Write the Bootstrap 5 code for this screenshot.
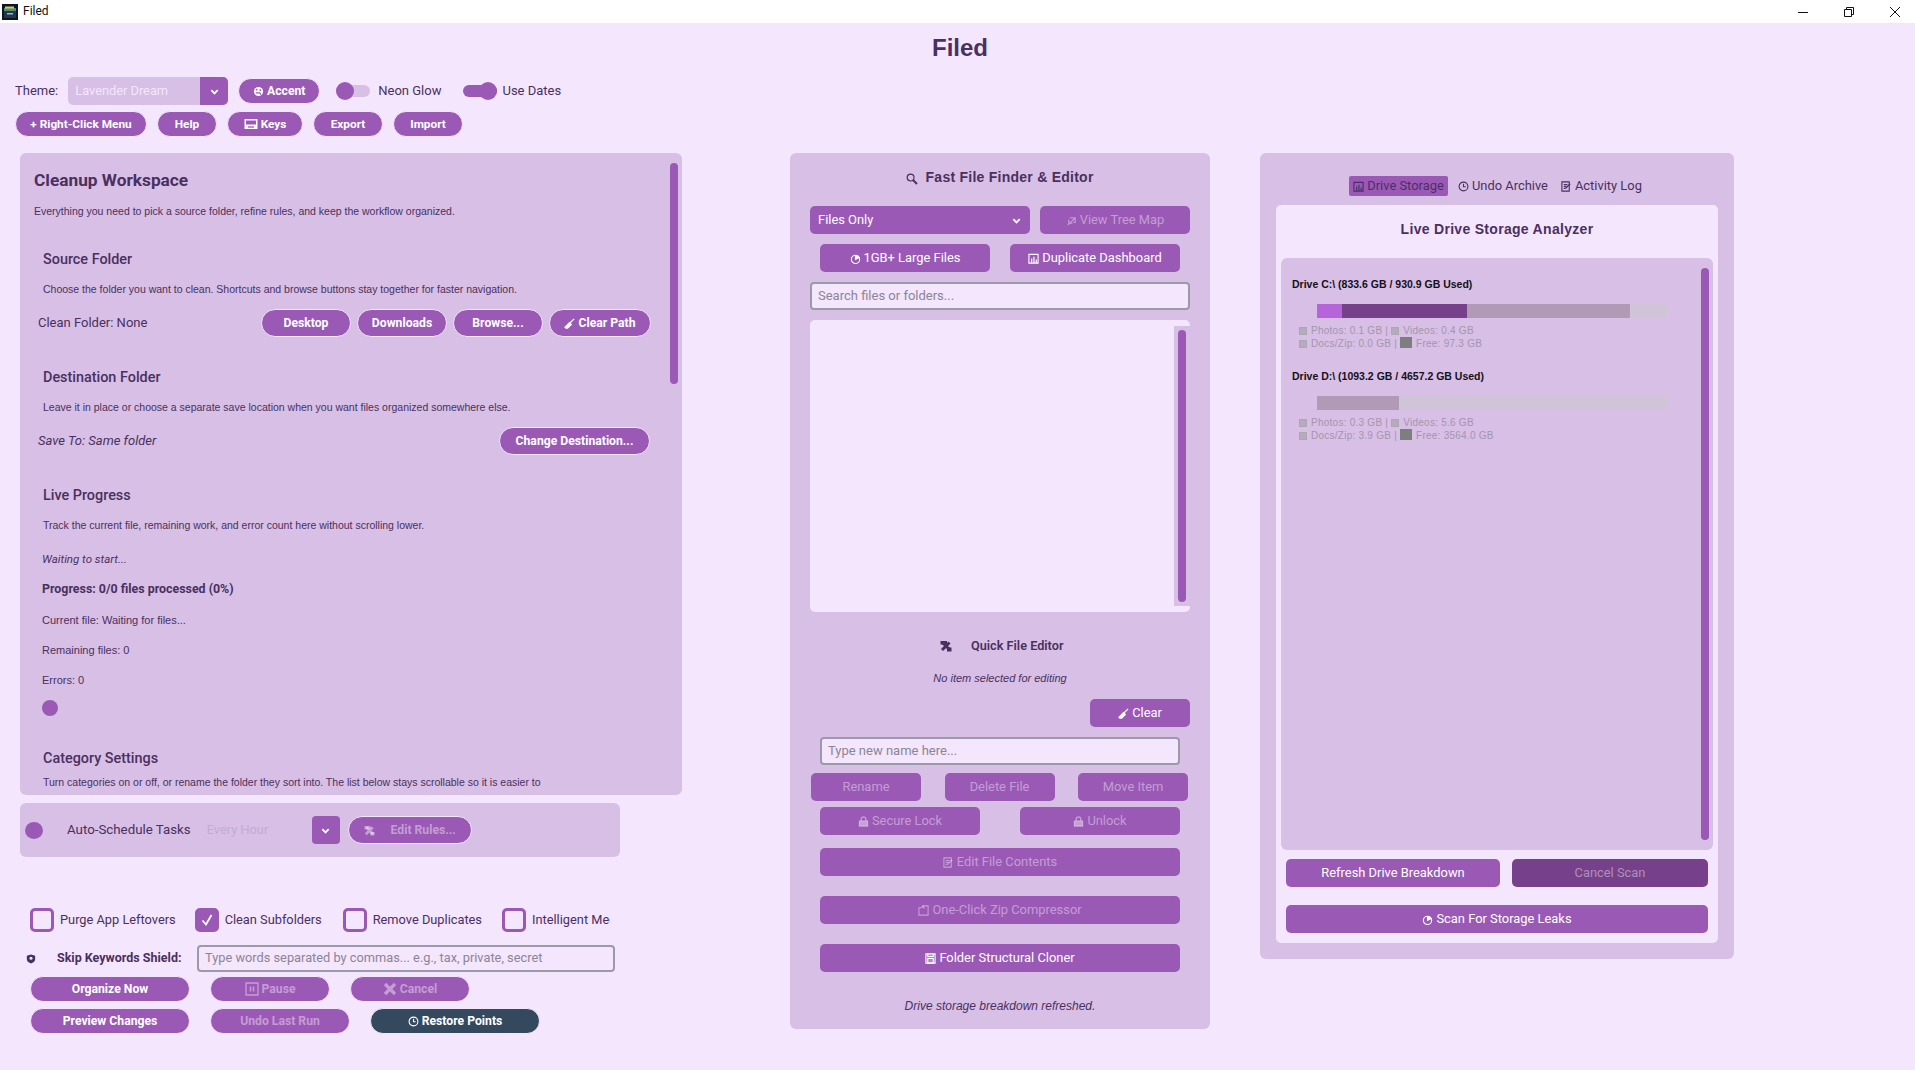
<!DOCTYPE html>
<html lang="en">
<head>
<meta charset="utf-8">
<title>Filed</title>
<link rel="stylesheet" href="https://cdn.jsdelivr.net/npm/bootstrap@5.3.0/dist/css/bootstrap.min.css">
<style>
:root{--pg:#f4e6fd;--pn:#d7bfe5;--ac:#9b59b6;--dk:#76418a;--tx:#4a3060;}
html,body{height:100%;}
body{margin:0;width:1915px;height:1070px;overflow:hidden;background:var(--pg);color:var(--tx);font-family:Roboto,"Liberation Sans",sans-serif;font-size:13px;}
.ticon{width:16px;height:16px;margin-left:2px;}
.titlebar{height:23px;background:#fff;color:#111;font-size:12px;line-height:23px;}
.wctl{width:46px;height:23px;}
.wctls{margin-right:-3px;}
.apphead{height:46px;margin:0;padding-left:5px;font:700 24px/50px "Liberation Sans",sans-serif;text-align:center;color:var(--tx);}
.bar1{height:28px;margin-top:8px;padding-left:15px;}
.bar2{height:26px;margin-top:6px;padding-left:15px;gap:10px;}
.combo{width:160px;height:28px;margin-left:10px;background:var(--pn);border-radius:5px;overflow:hidden;color:#f4e6fd;padding-left:7px;line-height:28px;font-size:12.8px;}
.chev{width:28px;height:28px;background:var(--ac);color:#fff;}
.tog{width:34px;height:18px;position:relative;}
.tog .trk{display:block;position:absolute;left:0;right:0;top:3px;height:12px;border-radius:6px;background:var(--pn);}
.tog .knb{display:block;position:absolute;top:0;width:18px;height:18px;border-radius:50%;background:var(--ac);}
.tog.on .trk{background:var(--ac);}
.tog.on .knb{right:0;}
.gap16{margin-left:16px}.gap22{margin-left:22px}.gap5{margin-left:5px}.gap8{margin-left:8px}.gap10l{margin-left:10px}
.btn.pl,.btn.sq{padding:0;height:28px;line-height:25px;font-size:12.2px;font-family:Roboto,sans-serif;background:var(--ac);color:#fff;white-space:nowrap;}
.btn.pl{font-weight:700;border:1px solid #f4e6fd;border-radius:14px;}
.btn.pl.h26{height:26px;line-height:24px;}
.bar2 .btn.pl{font-size:11.8px;}
.btn.sq{font-size:12.9px;font-weight:400;border:0;border-radius:5px;line-height:28px;}
.btn.dim{color:rgba(255,255,255,.42);}
.btn.navy{background:#34495e;}
.btn.deep{background:var(--dk);}
.b60{width:60px}.b70{width:70px}.b76{width:76px}.b82{width:82px}.b90{width:90px}.b102{width:102px}.b110{width:110px}.b120{width:120px}.b124{width:124px}.b132{width:132px}.b140{width:140px}.b151{width:151px}.b160{width:160px}.b170{width:170px}.b150{width:150px}.b196{width:196px}.b214{width:214px}.b220{width:220px}.b100{width:100px}
.ic{width:11px;height:11px;vertical-align:-2px;fill:none;stroke:currentColor;stroke-width:1.2;margin-right:3px;}
.ic.big{width:14px;height:14px;vertical-align:-3px;}
.ic.kb{width:14px;height:12px;}
.ic.srch{width:12px;height:12px;vertical-align:-3px;}
.main{margin-top:16px;padding-left:20px;align-items:flex-start;}
.panel{background:var(--pn);border-radius:6px;}
.pleft{width:662px;height:642px;overflow:hidden;position:relative;padding-left:14px;}
.sbar{position:absolute;width:8px;background:var(--ac);border-radius:4px;}
.wtitle{font-size:17.3px;font-weight:700;height:24px;line-height:24px;margin:15px 0 0;}
.wdesc{font:10.5px/16px "Liberation Sans",sans-serif;height:16px;white-space:nowrap;}
.wdesc.top{margin-top:11px;}
.shead{font-size:14.4px;font-weight:500;height:20px;line-height:20px;margin:31px 0 0;padding-left:9px;}
.sdesc{font:10.5px/16px "Liberation Sans",sans-serif;height:16px;margin-top:11px;padding-left:9px;white-space:nowrap;}
.srow{height:28px;margin-top:12px;padding-left:4px;padding-right:31px;line-height:28px;}
.sline{font:11px/16px "Liberation Sans",sans-serif;height:16px;padding-left:8px;}
.sline.bld{font:700 12.4px/16px Roboto,sans-serif;}
.sline.ital{font:italic 11.5px/16px Roboto,sans-serif;}
.m18{margin-top:18px}.m14{margin-top:14px}.m15{margin-top:15px}.m12{margin-top:12px}.m6{margin-top:6px}.m5{margin-top:5px}.m33{margin-top:33px}.m19{margin-top:19px}.m10{margin-top:10px}.m13{margin-top:13px}.m20{margin-top:20px}.m8{margin-top:8px}
.mr1{margin-right:1px;}
.gap6{gap:6px}
.dot{width:16px;height:16px;border-radius:50%;background:var(--ac);}
.dot.sp{margin-left:8px;}
.dot.wide{width:18px;height:17px;}
.sched{width:600px;height:54px;margin-top:8px;padding-left:5px;font-size:13.3px;}
.ghost{color:#c2add0;width:105px;font-size:12.8px;}
.cks{height:24px;margin-top:51px;padding-left:10px;width:590px;overflow:hidden;white-space:nowrap;font-size:12.8px;}
.ckbox{width:24px;height:24px;flex:none;border:3px solid var(--ac);border-radius:5px;margin-right:6px;}
.ckbox.on{background:var(--ac);color:#fff;}
.ck{margin-right:20px;}
.ck.c19{margin-right:19px;}
.ck.c21{margin-right:21px;}
.skip{height:27px;margin-top:13px;padding-left:6px;}
.skip label{font-size:12.5px;font-weight:700;margin:0 15px 0 21px;width:125px;white-space:nowrap;}
.fld.form-control{height:28px;min-height:0;padding:0 6px 2px;font-size:13px;background:var(--pg);border:2px solid #9a9aa8;border-radius:4px;box-shadow:none;}
.fld.form-control::placeholder{color:#8b8595;opacity:1;}
.skip .fld.form-control{width:418px;height:27px;font-size:12.8px;}
.shld{width:10px;height:12px;color:var(--tx);}
.arow{padding-left:10px;gap:20px;margin-top:4px;}
.arow.r2{margin-top:6px;}
.pmid{width:420px;height:876px;margin-left:108px;padding:0 20px;}
.phead{font:700 14px/20px "Liberation Sans",sans-serif;text-align:center;height:20px;padding-top:14px;box-sizing:content-box;letter-spacing:.25px;}
.gap10{gap:10px}.g20{gap:20px}
.srow2{height:28px;margin-top:10px;}
.listb{height:292px;margin-top:10px;background:var(--pg);border-radius:5px;position:relative;overflow:hidden;}
.ltrk{position:absolute;right:0;top:6px;bottom:6px;width:16px;background:var(--pn);}
.ltrk .sbar{left:4px;top:4px;bottom:4px;}
.qhead{height:20px;line-height:20px;margin-top:24px;font-size:12.7px;font-weight:600;padding-left:130px;}
.qhead svg{margin-right:19px;width:12px;height:12px;}
.noitem{font:italic 11px/16px "Liberation Sans",sans-serif;text-align:center;margin-top:14px;}
.status{font:italic 12px/16px "Liberation Sans",sans-serif;text-align:center;margin-top:26px;}
.px10{padding:0 10px}
.pr3{padding:0 2px 0 1px}
.pright{width:474px;height:806px;margin-left:50px;padding:23px 16px 0;}
.tabs{height:20px;line-height:20px;font-size:12.9px;padding-left:73px;gap:10px;}
.tabact{background:var(--ac);border-radius:2px;width:99px;text-align:center;color:#4d2e6b;}
.tab3{margin-left:3px;}
.inner{height:738px;margin-top:9px;background:var(--pg);border-radius:5px;padding:0 5px;}
.ihead{font:700 14px/20px "Liberation Sans",sans-serif;text-align:center;padding-top:14px;letter-spacing:.3px;box-sizing:content-box;height:20px;}
.drives{height:592px;margin-top:19px;position:relative;padding:0 11px;}
.drv{font:700 10.5px/14px "Liberation Sans",sans-serif;color:#15101a;padding-top:19px;white-space:nowrap;}
.sto{margin-left:25px;width:350px;height:14px;margin-top:13px;background:#cfc4d8;}
.sto span{display:block;height:14px;}
.leg{font:10px/13px "Liberation Sans",sans-serif;color:#a396ad;margin:6px 0 0 7px;letter-spacing:.25px;}
.leg i{display:inline-block;width:8px;height:8px;background:#b7a9c0;border:1px solid #aaa;margin-right:4px;vertical-align:-1px;}
.leg i.big{width:12px;height:11px;background:#7e7d80;border:0;}
.ibtns{padding:0 5px;}
.ibr{margin-top:9px;gap:12px;}
</style>
</head>
<body>
<svg width="0" height="0" class="d-block position-absolute">
  <symbol id="i-pal" viewBox="0 0 12 12"><circle cx="6" cy="6" r="5" fill="currentColor" stroke="none"/><circle cx="4" cy="4" r="1" fill="#9b59b6" stroke="none"/><circle cx="8" cy="4.500" r="1" fill="#9b59b6" stroke="none"/><path d="M3 7.500h4.500l1 2" stroke="#9b59b6"/></symbol>
  <symbol id="i-key" viewBox="0 0 14 12"><path d="M.5 1h13v10H.5z" fill="currentColor" stroke="none"/><path d="M2 2.500h10v4H2z" fill="#9b59b6" stroke="none"/><path d="M4 9h6" stroke="#9b59b6" stroke-width="1.300"/></symbol>
  <symbol id="i-brm" viewBox="0 0 12 12"><path d="M11 1 6 6" stroke-width="1.400"/><path d="M6 5 8 7 4 11 2 11 1 10z" fill="currentColor"/></symbol>
  <symbol id="i-srch" viewBox="0 0 12 12"><circle cx="4.600" cy="4.600" r="3.400"/><path d="M7 7l4 4" stroke-width="2"/></symbol>
  <symbol id="i-tree" viewBox="0 0 12 12"><path d="M2 11 10 3M4 3h6v5H8M3 5v4h4"/></symbol>
  <symbol id="i-disc" viewBox="0 0 12 12"><circle cx="6" cy="7" r="4.500"/><path d="M6 3a4 4 0 0 1 4 2L6 7z" fill="currentColor"/></symbol>
  <symbol id="i-chart" viewBox="0 0 12 12"><path d="M1 1.500h10v9.500H1z"/><path d="M4 11V6M6.500 11V4M9 11V7" stroke-width="1.300"/></symbol>
  <symbol id="i-lock" viewBox="0 0 12 12"><path d="M1.500 5.500h9V11h-9z" fill="currentColor"/><path d="M3.500 5.500V3.500a2.500 2.500 0 0 1 5 0v2" stroke-width="1.500"/></symbol>
  <symbol id="i-note" viewBox="0 0 12 12"><path d="M1 1h8v10H1zM3 4h4M3 6h3M3 8h2"/><path d="M5 8l5-5" stroke-width="1.400"/></symbol>
  <symbol id="i-zip" viewBox="0 0 12 12"><path d="M1 3h3l1-2h6v10H1z"/><path d="M5 1l2 3"/></symbol>
  <symbol id="i-save" viewBox="0 0 12 12"><path d="M1 1h10v10H1z"/><path d="M3 1v3h6V1M3 6h6v5H3z" fill="currentColor" fill-opacity=".25"/></symbol>
  <symbol id="i-pause" viewBox="0 0 14 14"><path d="M1 1h12v12H1z" stroke-width="1.300"/><path d="M5.500 4.500v5M8.500 4.500v5" stroke-width="1.500"/></symbol>
  <symbol id="i-x" viewBox="0 0 14 14"><path d="M2 2l10 10M12 2 2 12" stroke-width="3.200"/></symbol>
  <symbol id="i-clock" viewBox="0 0 12 12"><circle cx="6" cy="6" r="4.800"/><path d="M6 3v3.200h2.400"/></symbol>
  <symbol id="i-tool" viewBox="0 0 12 12"><path d="M2.500 2.500 10 10M9.500 2.500 2 10" stroke-width="3"/><path d="M.5 1h6.500v3.500H.5zM7 7.500h4.500V11.500H7z" fill="currentColor" stroke="none"/></symbol>
  <symbol id="i-shield" viewBox="0 0 12 12"><path d="M6 .5 11 2v4c0 3-2.500 4.500-5 5.500C3.500 10.500 1 9 1 6V2z" fill="currentColor"/><circle cx="6" cy="5" r="1.800" fill="#f4e6fd"/></symbol>
  <symbol id="i-chev" viewBox="0 0 12 12"><path d="M2.500 4.500 6 8l3.500-3.500" stroke-width="2"/></symbol>
</svg>

<header class="titlebar d-flex align-items-center">
  <svg class="ticon" viewBox="0 0 16 16"><rect width="16" height="16" fill="#0d1622"/><path d="M2 4h12v3H2z" fill="#4c8f7a"/><path d="M3 2.500h9v2H3z" fill="#e9c84a"/><path d="M2 7h12v7H2z" fill="#23364a"/><path d="M5 9h6v1.500H5z" fill="#9fb4c4"/></svg>
  <span class="gap5">Filed</span>
  <div class="ms-auto d-flex wctls">
    <div class="wctl d-flex align-items-center justify-content-center"><svg width="10" height="10"><path d="M0 5.500h10" stroke="#111"/></svg></div>
    <div class="wctl d-flex align-items-center justify-content-center"><svg width="10" height="10"><path d="M.5 2.500h7v7h-7zM2.500 2.500v-2h7v7h-2" fill="none" stroke="#111"/></svg></div>
    <div class="wctl d-flex align-items-center justify-content-center"><svg width="10" height="10"><path d="M0 0l10 10M10 0 0 10" stroke="#111"/></svg></div>
  </div>
</header>

<h1 class="apphead">Filed</h1>

<div class="bar1 d-flex align-items-center">
  <span>Theme:</span>
  <div class="combo d-flex justify-content-between"><span>Lavender Dream</span><span class="chev d-flex align-items-center justify-content-center"><svg class="ic m-0"><use href="#i-chev"/></svg></span></div>
  <button class="btn pl b82 h26 gap10l" type="button"><svg class="ic"><use href="#i-pal"/></svg>Accent</button>
  <span class="tog gap16"><span class="trk"></span><span class="knb"></span></span>
  <span class="gap8">Neon Glow</span>
  <span class="tog on gap22"><span class="trk"></span><span class="knb"></span></span>
  <span class="gap5">Use Dates</span>
</div>
<div class="bar2 d-flex">
  <button class="btn pl h26 b132" type="button">+ Right-Click Menu</button>
  <button class="btn pl h26 b60" type="button">Help</button>
  <button class="btn pl h26 b76" type="button"><svg class="ic kb"><use href="#i-key"/></svg>Keys</button>
  <button class="btn pl h26 b70" type="button">Export</button>
  <button class="btn pl h26 b70" type="button">Import</button>
</div>

<main class="main d-flex">
  <div>
    <section class="panel pleft">
      <span class="sbar" style="left:650px;top:10px;height:221px"></span>
      <h2 class="wtitle">Cleanup Workspace</h2>
      <p class="wdesc top mb-0">Everything you need to pick a source folder, refine rules, and keep the workflow organized.</p>

      <h3 class="shead">Source Folder</h3>
      <p class="sdesc mb-0">Choose the folder you want to clean. Shortcuts and browse buttons stay together for faster navigation.</p>
      <div class="srow d-flex justify-content-between">
        <span>Clean Folder: None</span>
        <div class="d-flex gap6">
          <button class="btn pl b90" type="button">Desktop</button>
          <button class="btn pl b90" type="button">Downloads</button>
          <button class="btn pl b90" type="button">Browse...</button>
          <button class="btn pl b102" type="button"><svg class="ic"><use href="#i-brm"/></svg>Clear Path</button>
        </div>
      </div>

      <h3 class="shead">Destination Folder</h3>
      <p class="sdesc mb-0">Leave it in place or choose a separate save location when you want files organized somewhere else.</p>
      <div class="srow d-flex justify-content-between">
        <em>Save To: Same folder</em>
        <button class="btn pl b151 mr1" type="button">Change Destination...</button>
      </div>

      <h3 class="shead">Live Progress</h3>
      <p class="sdesc mb-0">Track the current file, remaining work, and error count here without scrolling lower.</p>
      <div class="sline ital m18">Waiting to start...</div>
      <div class="sline bld m14">Progress: 0/0 files processed (0%)</div>
      <div class="sline m15">Current file: Waiting for files...</div>
      <div class="sline m14">Remaining files: 0</div>
      <div class="sline m14">Errors: 0</div>
      <div class="dot sp m12"></div>

      <h3 class="shead m33">Category Settings</h3>
      <p class="sdesc m5 mb-0">Turn categories on or off, or rename the folder they sort into. The list below stays scrollable so it is easier to</p>
    </section>

    <section class="panel sched d-flex align-items-center">
      <span class="dot wide"></span>
      <span class="ms-4">Auto-Schedule Tasks</span>
      <span class="ghost ms-3">Every Hour</span>
      <span class="chev d-flex align-items-center justify-content-center rounded-1"><svg class="ic m-0"><use href="#i-chev"/></svg></span>
      <button class="btn pl dim b124 ms-2" type="button"><svg class="ic me-3"><use href="#i-tool"/></svg>Edit Rules...</button>
    </section>

    <div class="cks d-flex align-items-center">
      <span class="ckbox"></span><span class="ck c19">Purge App Leftovers</span>
      <span class="ckbox on d-flex align-items-center justify-content-center"><svg width="16" height="16" viewBox="0 0 16 16"><path d="M3.500 8.500 7 12.500 12.500 3" fill="none" stroke="#fff" stroke-width="1.800"/></svg></span><span class="ck c21">Clean Subfolders</span>
      <span class="ckbox"></span><span class="ck">Remove Duplicates</span>
      <span class="ckbox"></span><span>Intelligent Media Sorting</span>
    </div>

    <div class="skip d-flex align-items-center">
      <svg class="shld"><use href="#i-shield"/></svg>
      <label>Skip Keywords Shield:</label>
      <input class="form-control fld" type="text" placeholder="Type words separated by commas... e.g., tax, private, secret">
    </div>
    <div class="arow d-flex">
      <button class="btn pl h26 b160" type="button">Organize Now</button>
      <button class="btn pl h26 dim b120" type="button"><svg class="ic big"><use href="#i-pause"/></svg>Pause</button>
      <button class="btn pl h26 dim b120" type="button"><svg class="ic big"><use href="#i-x"/></svg>Cancel</button>
    </div>
    <div class="arow r2 d-flex">
      <button class="btn pl h26 b160" type="button">Preview Changes</button>
      <button class="btn pl h26 dim b140" type="button">Undo Last Run</button>
      <button class="btn pl h26 navy b170" type="button"><svg class="ic"><use href="#i-clock"/></svg>Restore Points</button>
    </div>
  </div>

  <section class="panel pmid">
    <h2 class="phead mb-0"><svg class="ic srch"><use href="#i-srch"/></svg> Fast File Finder &amp; Editor</h2>
    <div class="d-flex gap10 m19">
      <div class="btn sq b220 d-flex justify-content-between align-items-center ps-1 pe-2"><span class="ms-1">Files Only</span><svg class="ic m-0"><use href="#i-chev"/></svg></div>
      <button class="btn sq dim b150" type="button"><svg class="ic"><use href="#i-tree"/></svg>View Tree Map</button>
    </div>
    <div class="srow2 d-flex justify-content-center g20">
      <button class="btn sq b170" type="button"><svg class="ic"><use href="#i-disc"/></svg>1GB+ Large Files</button>
      <button class="btn sq b170" type="button"><svg class="ic"><use href="#i-chart"/></svg>Duplicate Dashboard</button>
    </div>
    <input class="form-control fld m10" type="text" placeholder="Search files or folders...">
    <div class="listb"><div class="ltrk"><span class="sbar"></span></div></div>
    <div class="qhead"><svg class="ic"><use href="#i-tool"/></svg>Quick File Editor</div>
    <p class="noitem mb-0">No item selected for editing</p>
    <div class="d-flex justify-content-end m13"><button class="btn sq b100" type="button"><svg class="ic"><use href="#i-brm"/></svg>Clear</button></div>
    <div class="px10 m10"><input class="form-control fld" type="text" placeholder="Type new name here..."></div>
    <div class="pr3 d-flex justify-content-between m8"><button class="btn sq dim b110" type="button">Rename</button><button class="btn sq dim b110" type="button">Delete File</button><button class="btn sq dim b110" type="button">Move Item</button></div>
    <div class="px10 d-flex justify-content-between m6"><button class="btn sq dim b160" type="button"><svg class="ic"><use href="#i-lock"/></svg>Secure Lock</button><button class="btn sq dim b160" type="button"><svg class="ic"><use href="#i-lock"/></svg>Unlock</button></div>
    <div class="px10 m13"><button class="btn sq dim w-100" type="button"><svg class="ic"><use href="#i-note"/></svg>Edit File Contents</button></div>
    <div class="px10 m20"><button class="btn sq dim w-100" type="button"><svg class="ic"><use href="#i-zip"/></svg>One-Click Zip Compressor</button></div>
    <div class="px10 m20"><button class="btn sq w-100" type="button"><svg class="ic"><use href="#i-save"/></svg>Folder Structural Cloner</button></div>
    <p class="status mb-0">Drive storage breakdown refreshed.</p>
  </section>

  <section class="panel pright">
    <div class="tabs d-flex">
      <span class="tabact"><svg class="ic"><use href="#i-chart"/></svg>Drive Storage</span>
      <span><svg class="ic"><use href="#i-clock"/></svg>Undo Archive</span>
      <span class="tab3"><svg class="ic"><use href="#i-note"/></svg>Activity Log</span>
    </div>
    <div class="inner">
      <h2 class="ihead mb-0">Live Drive Storage Analyzer</h2>
      <div class="panel drives">
        <span class="sbar" style="right:4px;top:10px;bottom:10px"></span>
        <div class="drv">Drive C:\ (833.6 GB / 930.9 GB Used)</div>
        <div class="sto d-flex"><span style="width:25px;background:#b565d8"></span><span style="width:125px;background:#76418a"></span><span style="width:163px;background:#b09ab6"></span></div>
        <div class="leg"><i></i>Photos: 0.1 GB | <i></i>Videos: 0.4 GB<br><i></i>Docs/Zip: 0.0 GB | <i class="big"></i>Free: 97.3 GB</div>
        <div class="drv">Drive D:\ (1093.2 GB / 4657.2 GB Used)</div>
        <div class="sto d-flex"><span style="width:82px;background:#b09ab6"></span></div>
        <div class="leg"><i></i>Photos: 0.3 GB | <i></i>Videos: 5.6 GB<br><i></i>Docs/Zip: 3.9 GB | <i class="big"></i>Free: 3564.0 GB</div>
      </div>
      <div class="ibtns d-flex ibr"><button class="btn sq b214" type="button">Refresh Drive Breakdown</button><button class="btn sq dim deep b196" type="button">Cancel Scan</button></div>
      <div class="ibtns m18"><button class="btn sq w-100" type="button"><svg class="ic"><use href="#i-disc"/></svg>Scan For Storage Leaks</button></div>
    </div>
  </section>
</main>
</body>
</html>
